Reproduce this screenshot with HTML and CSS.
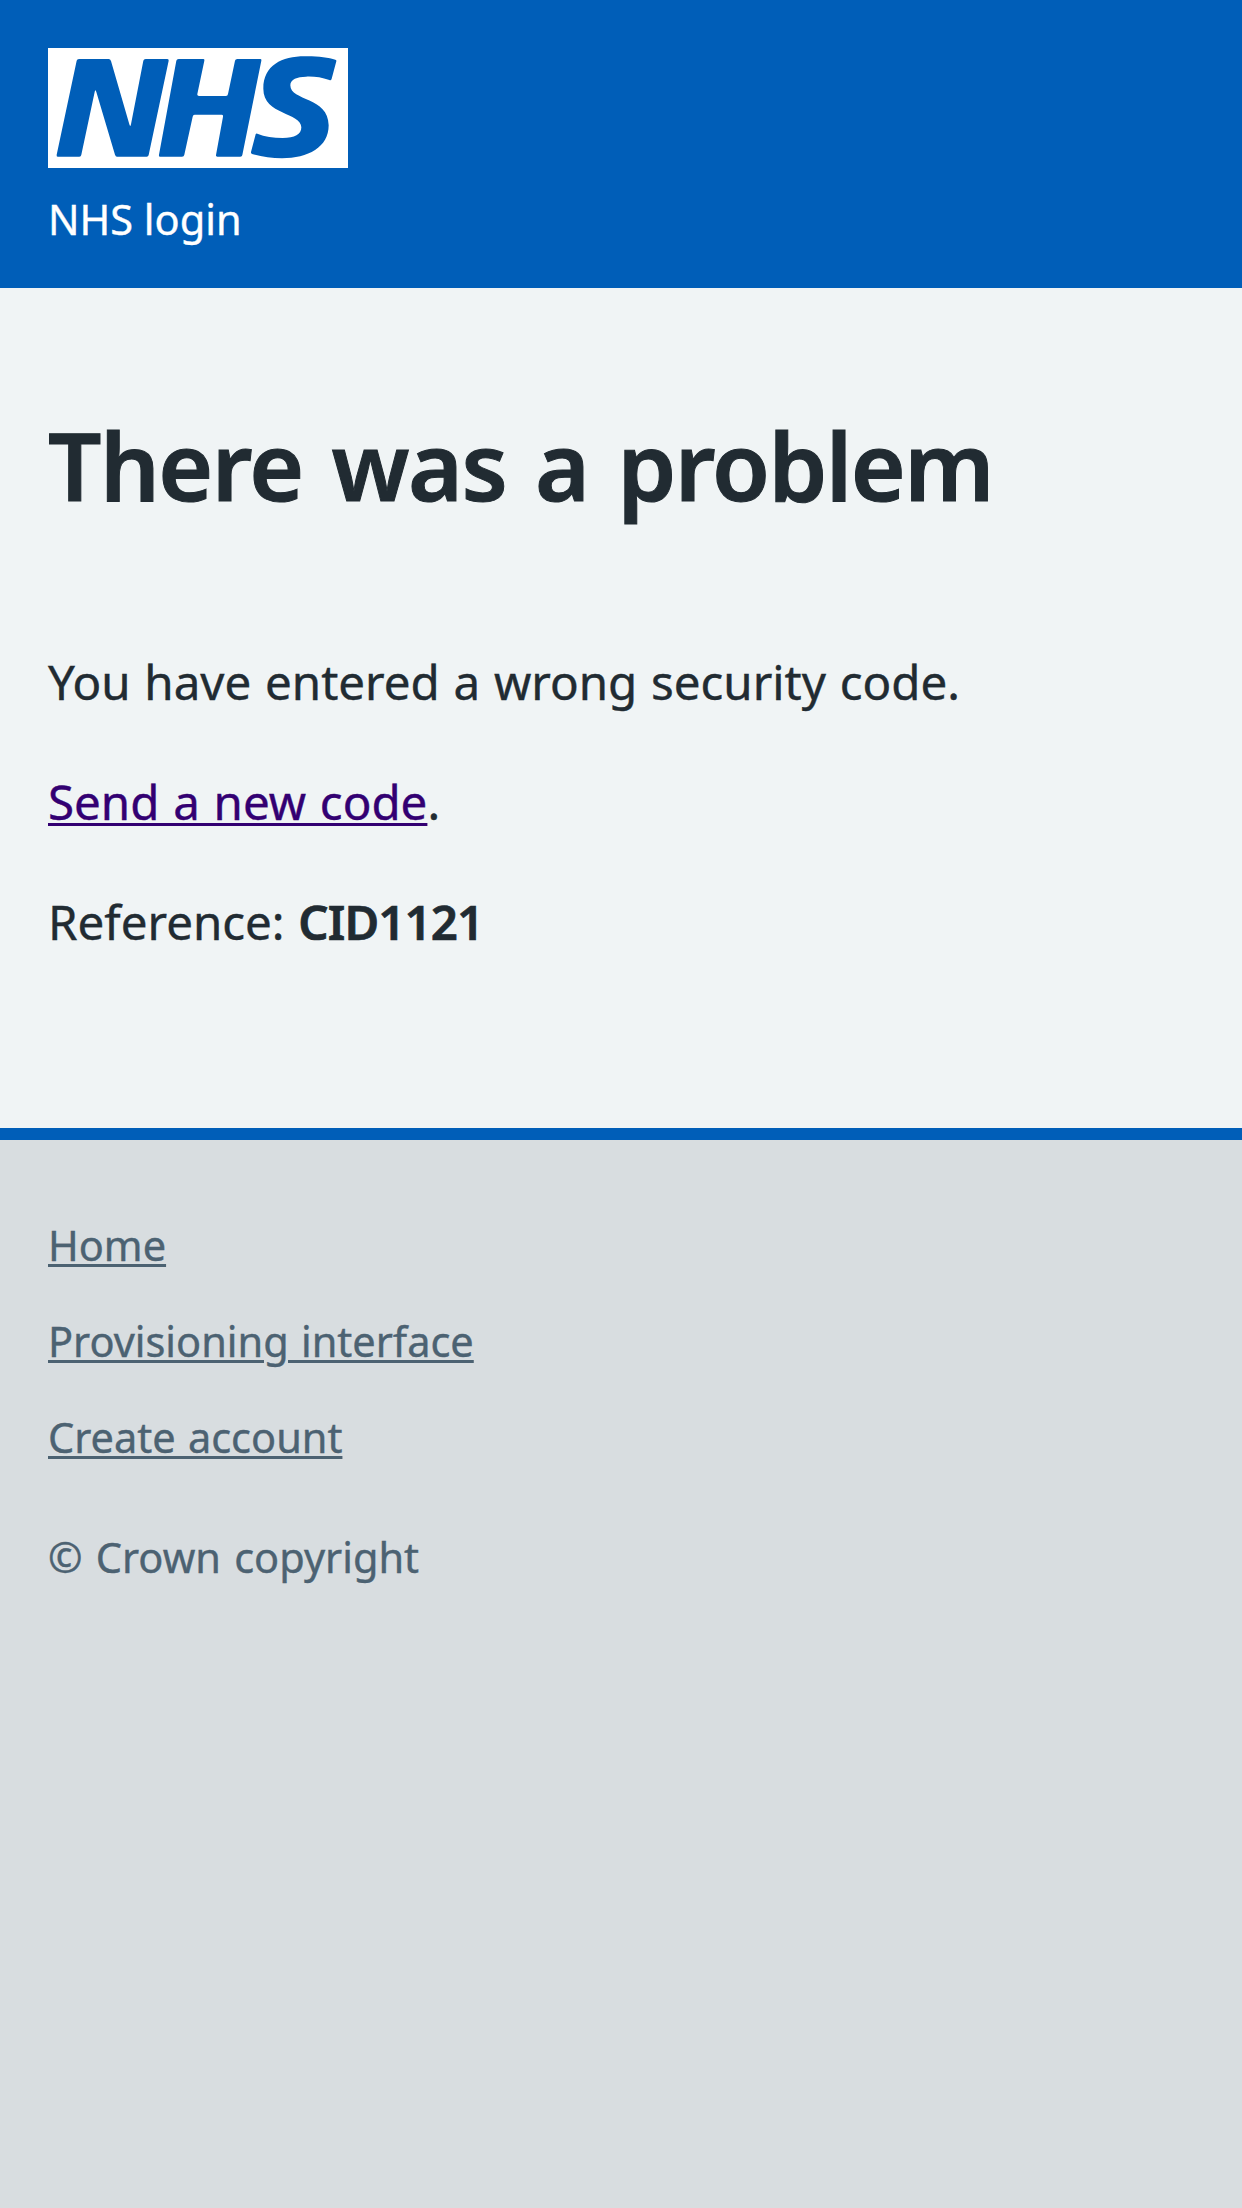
FILE: index.html
```html
<!DOCTYPE html>
<html lang="en">
<head>
<meta charset="utf-8">
<title>There was a problem - NHS login</title>
<link rel="stylesheet" href="styles.css">
</head>
<body>
<header class="header">
  <svg class="header-logo" viewBox="0 0 900 360" role="img" aria-label="NHS">
    <path fill="#fff" d="M0 0h900v360H0z"/>
    <path fill="#005eb8" d="M86 38q1-5 7-5H182q5 0 7 6L244 229q3 10 5 0L286 38q1-5 7-5H358q5 0 4 5L302 321q-1 5-6 5H207q-4 0-6-6L145 132q-3-11-5 0L100 320q-1 6-6 6H29q-4 0-3-6z"/>
    <path fill="#005eb8" d="M385 38q1-5 7-5H466q4 0 3 5L448 138q-1 6 5 6H534q5 0 6-6L561 38q1-5 7-5H637q4 0 3 5L583 321q-1 5-6 5H508q-5 0-4-5L525 206q1-6-4-6H440q-5 0-6 6L409 320q-1 6-7 6H336q-4 0-3-6z"/>
    <path fill="#005eb8" d="M862 35q4 1 3 5L851 92q-2 7-7 4C820 88 798 85 774 86C748 87 727 93 727 112C727 160 842 146 842 232C842 298 780 331 702 331C671 331 638 326 612 318q-4-2-3-6L623 259q1-3 5-2C650 266 676 270 704 270C740 270 760 260 760 238C760 192 646 202 646 122C646 52 702 25 770 25C805 24 842 29 862 35z"/>
  </svg>
  <div class="header-service">NHS login</div>
</header>
<main class="main">
  <h1 class="title">There was a problem</h1>
  <p class="text">You have entered a wrong security code.</p>
  <p class="text"><a class="link" href="#">Send a new code</a>.</p>
  <p class="text">Reference: <strong class="code">CID1121</strong></p>
</main>
<footer class="footer">
  <ul class="footer-list">
    <li><a class="footer-link" href="#">Home</a></li>
    <li><a class="footer-link" href="#">Provisioning interface</a></li>
    <li><a class="footer-link" href="#">Create account</a></li>
  </ul>
  <p class="copyright">© Crown copyright</p>
</footer>
</body>
</html>
```
FILE: styles.css
```css
* {
  box-sizing: border-box;
}

body {
  margin: 0;
  min-height: 100vh;
  background: #d8dde0;
  color: #212b32;
  font-family: "Noto Sans", sans-serif;
  -webkit-text-stroke: 0.4px;
}

.header {
  height: 288px;
  padding: 48px;
  background: #005eb8;
  color: #fff;
}

.header-logo {
  display: block;
  width: 300px;
  height: 120px;
}

.header-service {
  margin-top: 21px;
  font-size: 41.5px;
  line-height: 60px;
}

.main {
  height: 840px;
  padding: 117px 48px 0;
  background: #f0f4f5;
}

.title {
  margin: 0 0 121px;
  font-size: 94px;
  font-weight: 600;
  line-height: 120px;
  letter-spacing: -1.55px;
  word-spacing: 6px;
  -webkit-text-stroke: 1px;
}

.text {
  margin: 0 0 48px;
  font-size: 47.5px;
  line-height: 72px;
  word-spacing: 1.4px;
}

.code {
  font-weight: 600;
  letter-spacing: -0.9px;
  -webkit-text-stroke: 0.7px;
}

.link,
.footer-link {
  text-decoration-line: underline;
  text-decoration-thickness: 3px;
  text-underline-offset: 3px;
}

.link {
  color: #330072;
}

.footer {
  padding: 69px 48px 48px;
  border-top: 12px solid #005eb8;
  color: #4c6272;
  font-size: 41.5px;
  line-height: 72px;
}

.footer-list {
  display: grid;
  gap: 24px;
  margin: 0 0 48px;
  padding: 0;
  list-style: none;
  word-spacing: 1.5px;
}

.footer-link {
  color: inherit;
}

.copyright {
  margin: 0;
  word-spacing: 2.5px;
}
```
